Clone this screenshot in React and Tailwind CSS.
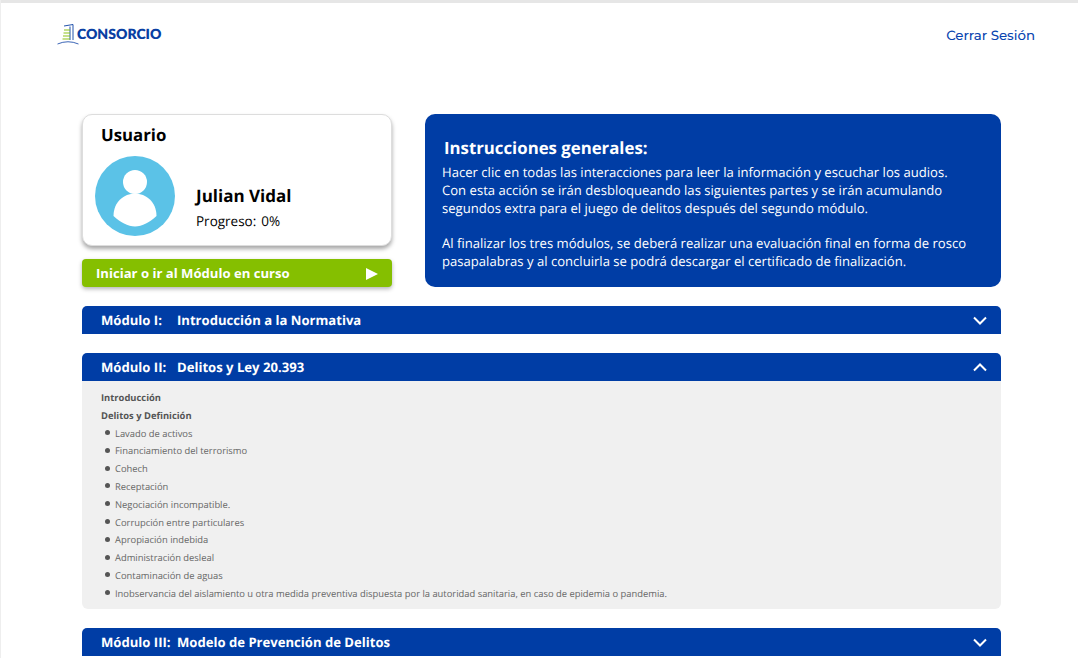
const delitos = [
  "Lavado de activos",
  "Financiamiento del terrorismo",
  "Cohech",
  "Receptación",
  "Negociación incompatible.",
  "Corrupción entre particulares",
  "Apropiación indebida",
  "Administración desleal",
  "Contaminación de aguas",
  "Inobservancia del aislamiento u otra medida preventiva dispuesta por la autoridad sanitaria, en caso de epidemia o pandemia.",
];

function Logo() {
  return (
    <div className="flex items-center">
      <svg width="22" height="22" viewBox="0 0 22 22" fill="none">
        <path d="M7 3 L16 1.5 V17" stroke="#0a3fa3" strokeWidth="0.9" />
        <path d="M13 3.5 V17" stroke="#0a3fa3" strokeWidth="0.9" />
        <path d="M7 7 H13 M6.5 10 H13 M6 13 H13 M5.5 16 H13" stroke="#8cc21a" strokeWidth="1.2" />
        <path d="M0.5 21 Q11 16.5 21.5 21" stroke="#0a3fa3" strokeWidth="0.8" />
      </svg>
      <span className="ml-[-2px] text-[14px] font-extrabold leading-none text-[#0a3fa3] font-['Lato',sans-serif]">CONSORCIO</span>
    </div>
  );
}

function ModuleHeader({ label, title, open }) {
  return (
    <div className="flex h-7 items-center justify-between rounded-t-[5px] bg-[#003da5] pl-[19px] pr-[14px] text-white">
      <div className="flex pt-[2px] text-[13.1px] font-bold">
        <span className="w-[76px]">{label}</span>
        <span>{title}</span>
      </div>
      <svg width="14" height="9" viewBox="0 0 14 9" fill="none" stroke="white" strokeWidth="2">
        <path d={open ? "M1 7.5 L7 1.5 L13 7.5" : "M1 1.5 L7 7.5 L13 1.5"} />
      </svg>
    </div>
  );
}

export default function App() {
  return (
    <div className="h-[658px] w-[1078px] overflow-hidden border-l border-[#eeeeee] bg-white font-['Open_Sans',sans-serif] [text-rendering:geometricPrecision]">
      <div className="h-[3px] bg-[#e6e6e6]" />

      <header className="flex h-[62px] items-start justify-between pl-[56px] pr-[43px] pt-[20px]">
        <Logo />
        <a className="mt-[3px] text-[13.3px] font-medium leading-5 text-[#0a45b0] font-['Montserrat','Inter',sans-serif]">Cerrar Sesión</a>
      </header>

      <main className="mx-[81px] mt-[49px] w-[919px]">
        <div className="flex gap-[33px]">
          <div className="w-[310px]">
            <div className="h-[132px] rounded-[10px] border border-[#dddddd] bg-white shadow-[0_3px_4px_rgba(0,0,0,0.35)]">
              <h2 className="pl-[18px] pt-[8px] text-[16.8px] font-bold leading-6 text-black">Usuario</h2>
              <div className="mt-[9px] flex pl-[12px]">
                <svg width="80" height="80" viewBox="0 0 80 80">
                  <circle cx="40" cy="40" r="40" fill="#5bc2e7" />
                  <circle cx="40" cy="26" r="12" fill="white" />
                  <path d="M18.5 60 C18.5 46 29 37.5 40 37.5 C51 37.5 61.5 46 61.5 60 C55 66 47 70.5 40 70.5 C33 70.5 25 66 18.5 60 Z" fill="white" />
                </svg>
                <div className="ml-[21px] mt-[28px]">
                  <div className="text-[17px] font-bold leading-6 text-black">Julian Vidal</div>
                  <div className="mt-[3px] flex text-[13.5px] leading-5 text-black">
                    <span className="font-medium">Progreso:</span>
                    <span className="ml-[5px]">0%</span>
                  </div>
                </div>
              </div>
            </div>
            <button className="mt-[13px] flex h-[28px] w-full items-center justify-between rounded bg-[#85bf00] pl-[14px] pr-[14px] pt-[1px] text-[13.1px] font-bold text-white shadow-[0_2px_4px_rgba(0,0,0,0.3)]">
              Iniciar o ir al Módulo en curso
              <svg width="12" height="12" viewBox="0 0 12 12" fill="white"><path d="M0 0 L12 6 L0 12 Z" /></svg>
            </button>
          </div>

          <section className="h-[173px] flex-1 rounded-[10px] bg-[#003da5] pl-[17px] pr-4 pt-[22px] text-white">
            <h2 className="ml-[2px] text-[16.8px] font-bold leading-6">Instrucciones generales:</h2>
            <p className="mt-[4px] text-[13.1px] leading-[17.8px]">
              Hacer clic en todas las interacciones para leer la información y escuchar los audios.<br />
              Con esta acción se irán desbloqueando las siguientes partes y se irán acumulando<br />
              segundos extra para el juego de delitos después del segundo módulo.<br />
              <br />
              Al finalizar los tres módulos, se deberá realizar una evaluación final en forma de rosco<br />
              pasapalabras y al concluirla se podrá descargar el certificado de finalización.
            </p>
          </section>
        </div>

        <div className="mt-[19px]">
          <ModuleHeader label="Módulo I:" title="Introducción a la Normativa" />
        </div>

        <div className="mt-[19px]">
          <ModuleHeader label="Módulo II:" title="Delitos y Ley 20.393" open />
          <div className="h-[228px] rounded-b-md bg-[#f0f0f0] pl-[19px] pt-[8px] text-[9.4px] leading-[17.8px] text-[#666666]">
            <div className="font-bold text-[#555555]">Introducción</div>
            <div className="font-bold text-[#555555]">Delitos y Definición</div>
            <ul>
              {delitos.map((d) => (
                <li key={d} className="flex items-center">
                  <span className="mb-[2px] ml-[4px] mr-[5px] h-[5px] w-[5px] rounded-full bg-[#555555]" />
                  {d}
                </li>
              ))}
            </ul>
          </div>
        </div>

        <div className="mt-[19px]">
          <ModuleHeader label="Módulo III:" title="Modelo de Prevención de Delitos" />
        </div>
      </main>
    </div>
  );
}
